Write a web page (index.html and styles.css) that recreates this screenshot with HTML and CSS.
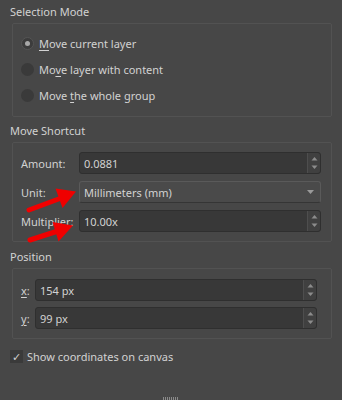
FILE: index.html
```html
<!DOCTYPE html>
<html lang="en">
<head>
    <meta charset="UTF-8">
    <meta name="viewport" content="width=device-width, initial-scale=1.0">
    <title>Move Tool Options</title>
    <link rel="stylesheet" href="styles.css">
</head>
<body>
    <div class="page">
        <div class="group-title">Selection Mode</div>
        <div class="group radios">
            <div class="radio-row"><span class="radio checked"></span><span><u>M</u>ove current layer</span></div>
            <div class="radio-row"><span class="radio"></span><span>Mo<u>v</u>e layer with content</span></div>
            <div class="radio-row"><span class="radio"></span><span>Move <u>t</u>he whole group</span></div>
        </div>

        <div class="group-title">Move Shortcut</div>
        <div class="group form shortcut">
            <div class="form-row">
                <span class="label">Amount:</span>
                <div class="spinbox">
                    <span class="value">0.0881</span>
                    <span class="spin-buttons">
                        <svg width="7" height="14" viewBox="0 0 7 14"><path d="M3.5 1 L6.5 4.5 L0.5 4.5 Z" fill="#8c8c8c"/><path d="M0.5 9.5 L6.5 9.5 L3.5 13 Z" fill="#8c8c8c"/></svg>
                    </span>
                </div>
            </div>
            <div class="form-row">
                <span class="label">Unit:</span>
                <div class="combo">
                    <span class="value">Millimeters (mm)</span>
                    <svg width="7" height="4" viewBox="0 0 7 4"><path d="M0 0 L7 0 L3.5 4 Z" fill="#9a9a9a"/></svg>
                </div>
            </div>
            <div class="form-row">
                <span class="label">Multiplier:</span>
                <div class="spinbox">
                    <span class="value">10.00x</span>
                    <span class="spin-buttons">
                        <svg width="7" height="14" viewBox="0 0 7 14"><path d="M3.5 1 L6.5 4.5 L0.5 4.5 Z" fill="#8c8c8c"/><path d="M0.5 9.5 L6.5 9.5 L3.5 13 Z" fill="#8c8c8c"/></svg>
                    </span>
                </div>
            </div>
        </div>

        <div class="group-title">Position</div>
        <div class="group form position">
            <div class="form-row">
                <span class="label short"><u>x</u>:</span>
                <div class="spinbox">
                    <span class="value">154 px</span>
                    <span class="spin-buttons">
                        <svg width="7" height="14" viewBox="0 0 7 14"><path d="M3.5 1 L6.5 4.5 L0.5 4.5 Z" fill="#8c8c8c"/><path d="M0.5 9.5 L6.5 9.5 L3.5 13 Z" fill="#8c8c8c"/></svg>
                    </span>
                </div>
            </div>
            <div class="form-row">
                <span class="label short"><u>y</u>:</span>
                <div class="spinbox">
                    <span class="value">99 px</span>
                    <span class="spin-buttons">
                        <svg width="7" height="14" viewBox="0 0 7 14"><path d="M3.5 1 L6.5 4.5 L0.5 4.5 Z" fill="#8c8c8c"/><path d="M0.5 9.5 L6.5 9.5 L3.5 13 Z" fill="#8c8c8c"/></svg>
                    </span>
                </div>
            </div>
        </div>

        <div class="check-row"><span class="checkbox">&#10003;</span>Show coordinates on canvas</div>

        <div class="grip"></div>

        <!-- red annotation arrows drawn over the form -->
        <svg class="arrows" width="342" height="400" viewBox="0 0 342 400">
            <line x1="29" y1="210" x2="60" y2="198.5" stroke="#f00000" stroke-width="5" stroke-linecap="round"/>
            <path d="M76 191.5 L55.5 188.5 L62.5 208 Z" fill="#f00000"/>
            <line x1="30" y1="240" x2="58" y2="231" stroke="#f00000" stroke-width="5" stroke-linecap="round"/>
            <path d="M73 225.5 L52.5 222 L58.5 241.5 Z" fill="#f00000"/>
        </svg>
    </div>
</body>
</html>
```

FILE: styles.css
```css
body {
    margin: 0;
    background-color: #474747;
    font-family: "Noto Sans", "Open Sans", sans-serif;
    font-size: 11px;
    color: #d2d2d2;
}
.page {
    position: relative;
    height: 400px;
    padding: 4px 10px 0 10px;
    box-sizing: border-box;
    display: flex;
    flex-direction: column;
}
.group-title {
    height: 16px;
    line-height: 16px;
    margin-bottom: 3px;
}
.group {
    margin-left: 2px;
    width: 320px;
    box-sizing: border-box;
    border: 1px solid #525252;
    border-radius: 2px;
    margin-bottom: 6px;
}
u {
    text-decoration-thickness: 1px;
    text-underline-offset: 2px;
}

/* radio group */
.radios {
    padding: 6px 0 7px 8px;
    height: 94px;
}
.radio-row {
    height: 26px;
    display: flex;
    align-items: center;
    gap: 5px;
}
.radio {
    width: 13px;
    height: 13px;
    border-radius: 50%;
    background-color: #3a3a3a;
    box-sizing: border-box;
    display: flex;
    justify-content: center;
    align-items: center;
}
.radio.checked {
    border: 1px solid #555;
    background-color: #3c3c3c;
}
.radio.checked::after {
    content: "";
    width: 5px;
    height: 5px;
    border-radius: 50%;
    background-color: #a8a8a8;
}

/* form rows */
.form {
    display: flex;
    flex-direction: column;
    gap: 7px;
}
.shortcut {
    padding: 9px 10px 9px 8px;
    margin-bottom: 7px;
}
.position {
    padding: 10px 14px 9px 8px;
    gap: 6px;
    margin-bottom: 9px;
}
.form-row {
    display: flex;
    align-items: center;
    height: 22px;
}
.label {
    width: 58px;
    flex-shrink: 0;
}
.label.short {
    width: 14px;
}
.spinbox {
    flex: 1;
    height: 22px;
    box-sizing: border-box;
    display: flex;
    align-items: stretch;
    background-color: #383838;
    border: 1px solid #2f2f2f;
    border-radius: 3px;
}
.spinbox .value {
    flex: 1;
    padding-left: 4px;
    display: flex;
    align-items: center;
}
.spin-buttons {
    width: 12px;
    display: flex;
    justify-content: center;
    align-items: center;
    background-color: #404040;
    border-left: 1px solid #4e4e4e;
    border-radius: 0 3px 3px 0;
}
.combo {
    flex: 1;
    height: 22px;
    box-sizing: border-box;
    display: flex;
    align-items: center;
    justify-content: space-between;
    padding: 0 6px 0 4px;
    background-color: #4a4a4a;
    border: 1px solid #5a5a5a;
    border-bottom-color: #353535;
    border-radius: 3px;
}

/* checkbox */
.check-row {
    display: flex;
    align-items: center;
    gap: 4px;
    height: 16px;
}
.checkbox {
    width: 13px;
    height: 13px;
    background-color: #3a3a3a;
    display: flex;
    justify-content: center;
    align-items: center;
    font-size: 11px;
    color: #cfcfcf;
}

.grip {
    margin-top: auto;
    align-self: center;
    width: 16px;
    height: 3px;
    background: repeating-linear-gradient(90deg, #8a8a8a 0 1px, transparent 1px 2px);
}
.arrows {
    position: absolute;
    left: 0;
    top: 0;
    pointer-events: none;
}
```
